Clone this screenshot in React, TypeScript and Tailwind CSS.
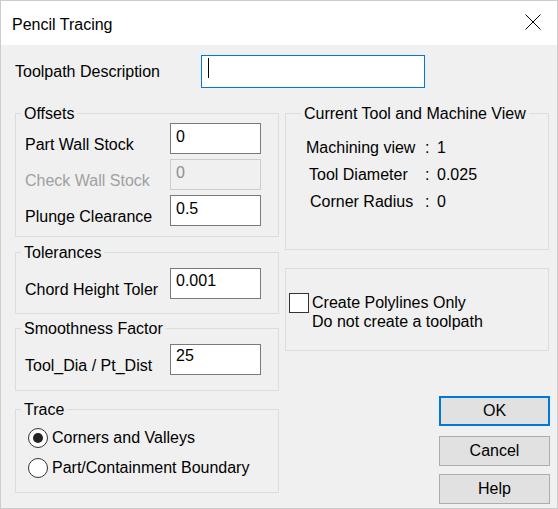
import type { ReactNode } from "react";

/** Static group box with its caption sitting on the top border. */
function GroupBox({
  title,
  titleClass,
  className,
  children,
}: {
  title?: string;
  titleClass?: string;
  className: string;
  children: ReactNode;
}) {
  return (
    <div className={`relative border border-[#dcdcdc] ${className}`}>
      {title && (
        <div className={`absolute -top-[10px] bg-[#f0f0f0] px-[3px] leading-[20px] whitespace-nowrap ${titleClass}`}>
          {title}
        </div>
      )}
      {children}
    </div>
  );
}

function FieldRow({
  label,
  value,
  disabled = false,
  valuePad,
}: {
  label: string;
  value: string;
  disabled?: boolean;
  valuePad: string;
}) {
  return (
    <div className="flex h-[31px]">
      <div className={`w-[145px] whitespace-nowrap pt-[12px] leading-[19px] ${disabled ? "text-[#a0a0a0]" : ""}`}>
        {label}
      </div>
      <div
        className={`h-[31px] w-[91px] border pl-[5px] leading-[20px] ${valuePad} ${
          disabled ? "border-[#cccccc] bg-[#f0f0f0] text-[#8f8f8f]" : "border-[#7a7a7a] bg-white"
        }`}
      >
        {value}
      </div>
    </div>
  );
}

function Radio({ checked, label }: { checked: boolean; label: string }) {
  return (
    <div className="flex h-[20px] items-center gap-[4px]">
      <div className="flex h-[20px] w-[20px] items-center justify-center rounded-full border border-[#333333] bg-white">
        {checked && <div className="h-[10px] w-[10px] rounded-full bg-[#222222]" />}
      </div>
      <span className="leading-[20px] whitespace-nowrap">{label}</span>
    </div>
  );
}

function InfoRow({ label, value, pad }: { label: string; value: string; pad: string }) {
  return (
    <div className="flex leading-[20px] whitespace-nowrap">
      <div className={`w-[139px] ${pad}`}>{label}</div>
      <span className="w-[12px]">:</span>
      <span>{value}</span>
    </div>
  );
}

function DialogButton({ label, primary = false, className = "" }: { label: string; primary?: boolean; className?: string }) {
  return (
    <div
      className={`flex h-[30px] w-[111px] items-center justify-center bg-[#e1e1e1] leading-[20px] ${
        primary ? "border-2 border-[#0078d7]" : "border border-[#adadad]"
      } ${className}`}
    >
      {label}
    </div>
  );
}

export default function App() {
  return (
    <div className="h-[509px] w-[558px] border border-[#cccccc] bg-[#f0f0f0] font-['Liberation_Sans',Arial,sans-serif] text-[16px] text-black">
      {/* title bar */}
      <div className="flex h-[44px] justify-between bg-white">
        <div className="pl-[11px] pt-[14px] leading-[20px]">Pencil Tracing</div>
        <svg className="mr-[16px] mt-[13px] h-[16px] w-[16px]" viewBox="0 0 16 16">
          <path d="M0.5 0.5 L15.5 15.5 M15.5 0.5 L0.5 15.5" stroke="#000" strokeWidth="1" fill="none" />
        </svg>
      </div>

      <div className="pl-[14px] pt-[10px]">
        <div className="flex">
          <div className="w-[186px] pt-[7px] leading-[20px]">Toolpath Description</div>
          <div className="h-[33px] w-[224px] border border-[#0078d7] bg-white pl-[6px] pt-[2px]">
            <div className="h-[20px] w-[1px] bg-black" />
          </div>
        </div>

        <div className="mt-[25px] flex gap-[6px]">
          {/* left column */}
          <div className="w-[264px]">
            <GroupBox title="Offsets" titleClass="left-[5px]" className="pb-[10px] pl-[9px] pt-[9px]">
              <div className="flex flex-col gap-[5px]">
                <FieldRow label="Part Wall Stock" value="0" valuePad="pt-[3px]" />
                <FieldRow label="Check Wall Stock" value="0" disabled valuePad="pt-[3px]" />
                <FieldRow label="Plunge Clearance" value="0.5" valuePad="pt-[3px]" />
              </div>
            </GroupBox>

            <GroupBox title="Tolerances" titleClass="left-[5px]" className="mt-[15px] pb-[14px] pl-[9px] pt-[15px]">
              <FieldRow label="Chord Height Toler" value="0.001" valuePad="pt-[2px]" />
            </GroupBox>

            <GroupBox title="Smoothness Factor" titleClass="left-[5px]" className="mt-[14px] pb-[15px] pl-[9px] pt-[15px]">
              <FieldRow label="Tool_Dia / Pt_Dist" value="25" valuePad="pt-[1px]" />
            </GroupBox>

            <GroupBox title="Trace" titleClass="left-[5px]" className="mt-[18px] pb-[14px] pl-[12px] pt-[18px]">
              <div className="flex flex-col gap-[10px]">
                <Radio checked label="Corners and Valleys" />
                <Radio checked={false} label="Part/Containment Boundary" />
              </div>
            </GroupBox>
          </div>

          {/* right column */}
          <div className="flex w-[264px] flex-col">
            <GroupBox title="Current Tool and Machine View" titleClass="left-[15px]" className="pb-[37px] pt-[24px]">
              <div className="flex flex-col gap-[7px]">
                <InfoRow label="Machining view" value="1" pad="pl-[20px]" />
                <InfoRow label="Tool Diameter" value="0.025" pad="pl-[23px]" />
                <InfoRow label="Corner Radius" value="0" pad="pl-[24px]" />
              </div>
            </GroupBox>

            <GroupBox className="mt-[18px] pb-[19px] pl-[3px] pt-[24px]">
              <div className="flex items-start gap-[3px]">
                <div className="h-[20px] w-[20px] border border-[#333333] bg-white" />
                <div className="leading-[19px] whitespace-nowrap">
                  <div>Create Polylines Only</div>
                  <div>Do not create a toolpath</div>
                </div>
              </div>
            </GroupBox>

            <div className="-mr-[1px] mt-[45px] flex flex-col items-end">
              <DialogButton label="OK" primary />
              <DialogButton label="Cancel" className="mt-[10px]" />
              <DialogButton label="Help" className="mt-[8px]" />
            </div>
          </div>
        </div>
      </div>
    </div>
  );
}
